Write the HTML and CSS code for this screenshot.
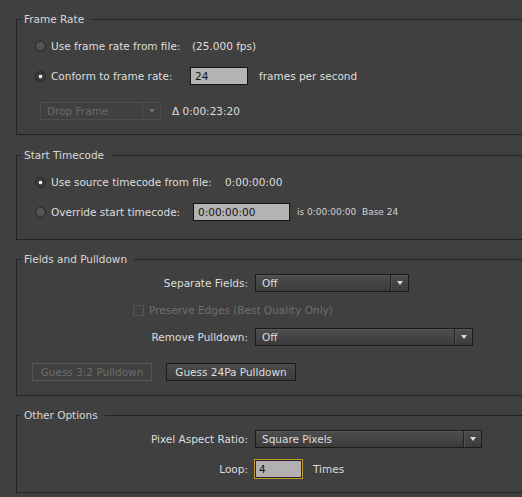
FILE: index.html
```html
<!DOCTYPE html>
<html>
<head>
<meta charset="utf-8">
<link rel="stylesheet" href="styles.css">
</head>
<body>
<div class="panel">
  <fieldset class="group g-frame">
    <legend>Frame Rate</legend>
    <div class="row radio-row r1">
      <span class="radio"></span>
      <span class="lbl w-fr">Use frame rate from file:</span>
      <span class="after-fps">(25.000 fps)</span>
    </div>
    <div class="row radio-row r2">
      <span class="radio on"></span>
      <span class="lbl w-fr">Conform to frame rate:</span>
      <span class="field w-rate">24</span>
      <span class="suffix">frames per second</span>
    </div>
    <div class="row drop-row">
      <span class="select disabled w-drop"><span class="sel-text">Drop Frame</span><span class="sel-btn"><span class="arrow"></span></span></span>
      <span class="delta">Δ 0:00:23:20</span>
    </div>
  </fieldset>

  <fieldset class="group g-start">
    <legend>Start Timecode</legend>
    <div class="row radio-row r1">
      <span class="radio on"></span>
      <span class="lbl w-src">Use source timecode from file:</span>
      <span>0:00:00:00</span>
    </div>
    <div class="row radio-row r2">
      <span class="radio"></span>
      <span class="lbl w-ovr">Override start timecode:</span>
      <span class="field w-tc">0:00:00:00</span>
      <span class="info">is 0:00:00:00&nbsp;&nbsp;Base 24</span>
    </div>
  </fieldset>

  <fieldset class="group g-fields">
    <legend>Fields and Pulldown</legend>
    <div class="form-row r1">
      <span class="form-label">Separate Fields:</span>
      <span class="select w-sep"><span class="sel-text">Off</span><span class="sel-btn"><span class="arrow"></span></span></span>
    </div>
    <div class="row check-row">
      <span class="checkbox"></span>
      <span class="muted">Preserve Edges (Best Quality Only)</span>
    </div>
    <div class="form-row r3">
      <span class="form-label">Remove Pulldown:</span>
      <span class="select w-rem"><span class="sel-text">Off</span><span class="sel-btn"><span class="arrow"></span></span></span>
    </div>
    <div class="row btn-row">
      <span class="btn disabled w-b1">Guess 3:2 Pulldown</span>
      <span class="btn w-b2">Guess 24Pa Pulldown</span>
    </div>
  </fieldset>

  <fieldset class="group g-other">
    <legend>Other Options</legend>
    <div class="form-row r1">
      <span class="form-label">Pixel Aspect Ratio:</span>
      <span class="select w-par"><span class="sel-text">Square Pixels</span><span class="sel-btn"><span class="arrow"></span></span></span>
    </div>
    <div class="form-row loop-row">
      <span class="form-label">Loop:</span>
      <span class="loop-wrap">
        <span class="field focus w-loop">4</span>
        <span class="suffix-times">Times</span>
      </span>
    </div>
  </fieldset>
</div>
</body>
</html>
```

FILE: styles.css
```css
html, body {
  margin: 0;
  padding: 0;
}
body {
  width: 522px;
  height: 497px;
  overflow: hidden;
  background: #404040;
  font-family: "DejaVu Sans", "Liberation Sans", sans-serif;
  font-size: 10.5px;
  color: #dedede;
}
.panel {
  padding-top: 13px;
}
.group {
  margin: 0 -20px 0 16px;
  padding: 0;
  border: 1px solid #232323;
  border-right: none;
  min-width: 0;
}
.group legend {
  margin-left: 4px;
  padding: 0 7px 0 3px;
  height: 13px;
  line-height: 13px;
  color: #d8d8d8;
}
.g-frame { padding: 11px 0 14px; }
.g-start { margin-top: 14px; padding: 11px 0 18px; }
.g-fields { margin-top: 13px; padding: 8px 0 14px; }
.g-other { margin-top: 13px; padding: 8px 0 13px; }

.row {
  display: flex;
  align-items: center;
  height: 18px;
  white-space: nowrap;
}
.radio-row { padding-left: 18px; }
.radio-row.r2 { margin-top: 12px; }
.g-frame .drop-row { margin-top: 17px; padding-left: 23px; }

.radio {
  width: 9px;
  height: 9px;
  border: 1px solid #262626;
  border-radius: 50%;
  background: linear-gradient(#5c5c5c, #4a4a4a);
  margin-right: 5px;
  flex: none;
}
.radio.on {
  background: radial-gradient(circle, #ececec 0 1.4px, #3b3b3b 2.2px);
}
.lbl { flex: none; }
.w-fr { width: 139px; }
.w-src { width: 174px; }
.w-ovr { width: 142px; }
.after-fps { padding-left: 2px; }

.field {
  box-sizing: border-box;
  height: 18px;
  line-height: 16px;
  padding-left: 4px;
  background: #b4b4b4;
  border: 1px solid #161616;
  color: #151515;
  flex: none;
}
.w-rate { width: 58px; }
.w-tc { width: 97px; }
.suffix { margin-left: 11px; }
.info { margin-left: 7px; font-size: 9px; color: #d2d2d2; }

.select {
  box-sizing: border-box;
  display: flex;
  height: 18px;
  border: 1px solid #1b1b1b;
  background: linear-gradient(#4e4e4e, #3b3b3b);
  box-shadow: inset 0 1px 0 #575757;
  color: #dedede;
  flex: none;
}
.sel-text {
  flex: 1;
  line-height: 16px;
  padding-left: 6px;
}
.sel-btn {
  width: 17px;
  border-left: 1px solid #242424;
  box-shadow: inset 1px 0 0 #505050;
  display: flex;
  align-items: center;
  justify-content: center;
}
.arrow {
  width: 0;
  height: 0;
  border-left: 3.5px solid transparent;
  border-right: 3.5px solid transparent;
  border-top: 4px solid #dcdcdc;
}
.select.disabled {
  background: #404040;
  border-color: #4d4d4d;
  box-shadow: none;
  color: #696969;
}
.select.disabled .sel-btn {
  border-left-color: #4d4d4d;
  box-shadow: none;
}
.select.disabled .arrow { border-top-color: #6a6a6a; }
.w-drop { width: 121px; }
.delta { margin-left: 11px; }

.form-row {
  display: grid;
  grid-template-columns: 231px auto;
  column-gap: 7px;
  align-items: center;
  height: 18px;
  white-space: nowrap;
}
.form-label { text-align: right; }
.w-sep { width: 154px; }
.w-rem { width: 218px; }
.w-par { width: 227px; }
.g-fields .r3 { margin-top: 9px; }

.check-row { margin-top: 9px; padding-left: 116px; }
.checkbox {
  box-sizing: border-box;
  width: 11px;
  height: 11px;
  border: 1px solid #555;
  margin-right: 5px;
}
.muted { color: #6f6f6f; }

.btn-row { margin-top: 17px; padding-left: 15px; }
.btn {
  box-sizing: border-box;
  height: 18px;
  line-height: 16px;
  text-align: center;
  border: 1px solid #1b1b1b;
  background: linear-gradient(#4a4a4a, #3d3d3d);
  color: #dedede;
  flex: none;
}
.btn.disabled {
  background: #404040;
  border-color: #545454;
  color: #6c6c6c;
}
.w-b1 { width: 120px; }
.w-b2 { width: 130px; margin-left: 14px; }

.loop-row { margin-top: 11px; height: 20px; }
.loop-wrap { display: flex; align-items: center; margin-left: -1px; }
.field.focus {
  height: 20px;
  line-height: 18px;
  border: 1px solid #c49b2d;
  box-shadow: inset 0 0 0 1px #262626;
  background: #b2b0b2;
}
.w-loop { width: 49px; }
.suffix-times { margin-left: 10px; }
```
